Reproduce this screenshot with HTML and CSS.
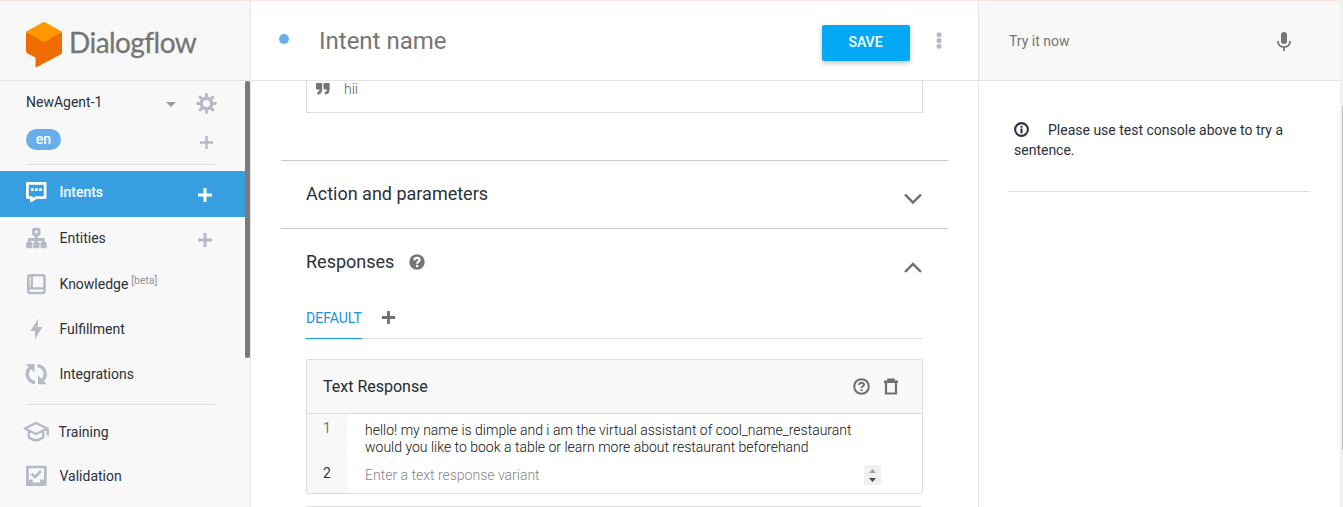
FILE: index.html
```html
<!DOCTYPE html>
<html lang="en">
<head>
<meta charset="utf-8">
<title>Dialogflow</title>
<link rel="stylesheet" href="styles.css">
</head>
<body>
<div class="app">
  <aside class="sidebar">
    <header class="brand">
      <svg class="brand-mark" viewBox="0 0 36 46" width="36" height="46">
        <path fill="#ef6c00" d="M0 10 18 18 36 10V30Q36 31.500 34.500 32.500L11 45Q9.500 45.500 9.500 44V35.500L1.500 31.500Q0 30.500 0 29Z"/>
        <path fill="#ff9800" d="M16.500.5Q18-.3 19.500.5L36 9.800 19.500 19.400Q18 20.200 16.500 19.400L0 9.800Z"/>
      </svg>
      <span class="brand-name">Dialogflow</span>
    </header>
    <div class="side-body">
      <div class="agent">
        <span class="agent-name">NewAgent-1</span>
        <svg class="caret" viewBox="0 0 10 5" width="10" height="5"><path d="M0 0H10L5 5Z"/></svg>
        <svg class="gear" viewBox="0 0 20 20" width="21" height="21">
          <g stroke="currentColor" stroke-width="2.800" stroke-linecap="round">
            <path d="M10 1.500V4.500M10 15.500V18.500M1.500 10H4.500M15.500 10H18.500M3.850 3.850 6 6M14 14 16.150 16.150M16.150 3.850 14 6M6 14 3.850 16.150"/>
          </g>
          <circle cx="10" cy="10" r="5" fill="none" stroke="currentColor" stroke-width="3.200"/>
        </svg>
      </div>
      <div class="lang">
        <span class="pill">en</span>
        <svg class="plus small" viewBox="0 0 16 16" width="15" height="15"><path d="M8 1V15M1 8H15"/></svg>
      </div>
      <hr class="rule">
      <nav class="nav">
        <a class="item active">
          <svg class="icon" viewBox="0 0 22 22" width="22" height="22"><path fill="none" stroke="currentColor" stroke-width="2.800" stroke-linejoin="round" d="M2.400 2.400H20.100V16.600H11L6.500 19.700V16.600H2.400Z"/><path fill="currentColor" d="M5.800 7.300H8.600V10H5.800ZM9.900 7.300H12.700V10H9.900ZM14 7.300H16.800V10H14Z"/></svg>
          <span class="label">Intents</span>
          <svg class="plus" viewBox="0 0 16 16" width="16" height="16"><path d="M8 1V15M1 8H15"/></svg>
        </a>
        <a class="item">
          <svg class="icon" viewBox="0 0 22 22" width="22" height="22"><g fill="none" stroke="currentColor" stroke-width="2.900"><rect x="8.500" y="2.200" width="5.600" height="5.600" rx="1.200"/><path d="M11.300 8V16M4.300 16V12.500H18.300V16"/></g><g fill="currentColor"><rect x="1" y="15" width="6.300" height="6.300" rx="1.200"/><rect x="8.200" y="15" width="6.300" height="6.300" rx="1.200"/><rect x="15.500" y="15" width="6.300" height="6.300" rx="1.200"/></g></svg>
          <span class="label">Entities</span>
          <svg class="plus" viewBox="0 0 16 16" width="16" height="16"><path d="M8 1V15M1 8H15"/></svg>
        </a>
        <a class="item">
          <svg class="icon" viewBox="0 0 22 22" width="22" height="22"><rect x="3.300" y="2.200" width="16.200" height="17.800" rx="1.700" fill="none" stroke="currentColor" stroke-width="2.600"/><path d="M6.800 2V15.300M3 15.300H19" fill="none" stroke="currentColor" stroke-width="2.300"/></svg>
          <span class="label">Knowledge <span class="beta">[beta]</span></span>
        </a>
        <a class="item row-short">
          <svg class="icon" viewBox="0 0 22 22" width="22" height="22"><path fill="currentColor" d="M13.300.5 5.500 13H10L10 21.500 17.300 9H12.700Z"/></svg>
          <span class="label">Fulfillment</span>
        </a>
        <a class="item row-short">
          <svg class="icon" viewBox="0 0 22 22" width="22" height="22"><g fill="none" stroke="currentColor" stroke-width="3.300"><path d="M10 19.500A8.600 8.600 0 0 1 5 4.700"/><path d="M12.300 2.700A8.600 8.600 0 0 1 17.500 17.500"/></g><path fill="currentColor" d="M1 1H9.500V9.500ZM21.700 21.200H13V12.500Z"/></svg>
          <span class="label">Integrations</span>
        </a>
      </nav>
      <hr class="rule">
      <nav class="nav lower">
        <a class="item train">
          <svg class="icon wide" viewBox="0 0 26 22" width="26" height="22"><path fill="none" stroke="currentColor" stroke-width="2.300" stroke-linejoin="round" d="M1.800 7.500 13 2 24.200 7.500 13 13ZM5.800 10V16.500Q13 22 20.200 16.500V10M24.800 8V14.500"/></svg>
          <span class="label">Training</span>
        </a>
        <a class="item">
          <svg class="icon" viewBox="0 0 22 22" width="22" height="22"><path fill="currentColor" fill-rule="evenodd" d="M2 .7H20.700Q21.700.7 21.700 1.700V19.900Q21.700 20.900 20.700 20.900H2Q1 20.900 1 19.900V1.700Q1 .7 2 .7ZM3.700 3.300V14.500H7.700V17.500H15V14.500H19V3.300Z"/><path fill="none" stroke="currentColor" stroke-width="2.700" d="M6.500 8.800 10 12.100 16 6"/></svg>
          <span class="label">Validation</span>
        </a>
      </nav>
      <div class="side-thumb"></div>
    </div>
  </aside>

  <main class="main">
    <header class="topbar">
      <span class="dot"></span>
      <span class="title">Intent name</span>
      <button class="save">SAVE</button>
      <svg class="more" viewBox="0 0 6 17" width="6" height="17"><circle cx="3" cy="2.800" r="2.500"/><circle cx="3" cy="8.500" r="2.500"/><circle cx="3" cy="14.200" r="2.500"/></svg>
    </header>
    <div class="content">
      <div class="phrase">
        <svg viewBox="0 0 14 12" width="14" height="12"><path fill="currentColor" d="M1 0H5Q6.200 0 6.200 1.200V6Q6.200 11.500 1.300 11.500V9Q3.500 9 3.500 6.500H1Q0 6.500 0 5.500V1Q0 0 1 0ZM8.500 0H12.500Q13.700 0 13.700 1.200V6Q13.700 11.500 8.800 11.500V9Q11 9 11 6.500H8.500Q7.500 6.500 7.500 5.500V1Q7.500 0 8.500 0Z"/></svg>
        <span>hii</span>
      </div>
      <section class="section action">
        <h2>Action and parameters</h2>
        <svg class="chev" viewBox="0 0 18 12" width="18" height="12"><path d="M1 1.500 9 9.500 17 1.500"/></svg>
      </section>
      <section class="section responses">
        <h2>Responses</h2>
        <svg class="help" viewBox="0 0 16 16" width="16" height="16"><circle cx="8" cy="8" r="7.700" fill="currentColor"/><path fill="none" stroke="#fff" stroke-width="2.100" d="M5.300 6.300Q5.500 3.900 8 3.900T10.600 6C10.600 7.700 8.100 7.600 8.100 9.700"/><circle cx="8.100" cy="12" r="1.300" fill="#fff"/></svg>
        <svg class="chev up" viewBox="0 0 18 12" width="18" height="12"><path d="M1 10 9 2 17 10"/></svg>
      </section>
      <div class="tabs">
        <span class="tab">DEFAULT</span>
        <svg class="plus tab-plus" viewBox="0 0 16 16" width="15" height="15"><path d="M8 1V15M1 8H15"/></svg>
      </div>
      <div class="card">
        <div class="card-head">
          <span class="card-title">Text Response</span>
          <svg viewBox="0 0 17 17" width="17" height="17"><circle cx="8.500" cy="8.500" r="7.300" fill="none" stroke="currentColor" stroke-width="2.100"/><path fill="none" stroke="currentColor" stroke-width="1.900" d="M6 6.800Q6.200 4.700 8.500 4.700T11 6.700C11 8.200 8.500 8.200 8.500 10"/><path fill="currentColor" d="M7.500 11.200H9.500V13H7.500Z"/></svg>
          <svg class="trash" viewBox="0 0 14 17" width="14" height="17"><path fill="none" stroke="currentColor" stroke-width="2.200" d="M2 4V15.500H12V4"/><path fill="currentColor" d="M0 2.500H3.200V.5H10.800V2.500H14V5H0Z"/></svg>
        </div>
        <div class="variant first">
          <span class="num">1</span>
          <p>hello! my name is dimple and i am the virtual assistant of cool_name_restaurant<br>would you like to book a table or learn more about restaurant beforehand</p>
        </div>
        <div class="variant second">
          <span class="num">2</span>
          <p class="placeholder">Enter a text response variant</p>
          <span class="spin"><svg viewBox="0 0 17 20" width="17" height="20"><path fill="#a3a3a3" d="M5 8 8.500 4 12 8Z"/><path fill="#504545" d="M5 13H12L8.500 17Z"/></svg></span>
        </div>
      </div>
      <div class="next-card"></div>
    </div>
  </main>

  <aside class="console">
    <header class="try">
      <span class="try-text">Try it now</span>
      <svg viewBox="0 0 14 19" width="14" height="19"><rect x="4" y="0" width="6" height="12" rx="3" fill="currentColor"/><path fill="none" stroke="currentColor" stroke-width="1.700" d="M.9 9Q1.200 15 7 15T13.100 9M7 15V19"/></svg>
    </header>
    <div class="notice">
      <svg viewBox="0 0 16 16" width="15" height="15"><circle cx="8" cy="8" r="6.800" fill="none" stroke="currentColor" stroke-width="2.200"/><path stroke="currentColor" stroke-width="2.200" d="M8 7V12M8 4V6"/></svg><span class="notice-text">Please use test console above to try a sentence.</span>
    </div>
  </aside>
  <div class="page-scroll"><div class="page-thumb"></div></div>
</div>
</body>
</html>
```
FILE: styles.css
```css
* { box-sizing: border-box; }
body {
  margin: 0;
  overflow: hidden;
  background: #fff;
  color: #2b303b;
  font: 14px/20px Roboto, "Liberation Sans", sans-serif;
}
svg { display: block; flex: none; }
.app {
  display: grid;
  grid-template-columns: 251px 727px 362px 3px;
  height: 507px;
}
.sidebar, .main, .console { min-width: 0; overflow: hidden; }
.brand, .topbar, .try {
  display: flex;
  height: 81px;
  border-top: 1px solid #fde3e1;
  border-bottom: 1px solid #e4e4e4;
}

/* Sidebar */
.sidebar { background: #f8f8f8; border-right: 1px solid #e4e4e4; }
.brand { padding: 21px 0 0 26px; }
.brand-name {
  margin: 0 0 0 7px;
  color: #757575;
  font: 28px/40px Lato, sans-serif;
  letter-spacing: -0.550px;
  -webkit-text-stroke: 0.3px #757575;
}
.side-body { position: relative; height: 426px; }
.side-thumb {
  position: absolute;
  top: 0;
  right: 0;
  width: 5px;
  height: 277px;
  border-radius: 2px;
  background: #7b7b7b;
}
.agent { display: flex; padding: 11px 33px 0 26px; height: 48px; color: #2b303b; }
.agent-name { flex: 1; }
.caret { margin: 10px 20px 0 0; fill: #9499a8; }
.gear { margin-top: 1px; color: #b5bac6; }
.lang { display: flex; justify-content: space-between; height: 35px; padding: 0 36px 0 26px; }
.pill {
  width: 35px;
  height: 21px;
  border-radius: 11px;
  background: #67aeea;
  color: #fff;
  font-weight: 500;
  line-height: 20px;
  text-align: center;
}
.plus { color: #b5bac6; fill: none; stroke: currentColor; stroke-width: 3; }
.plus.small { margin-top: 6px; stroke-width: 2.600; }
.rule { height: 1px; margin: 0 35px 0 26px; border: 0; background: #e0e0e0; }
.nav { padding-top: 6px; margin-bottom: 5px; }
.item { display: flex; height: 46px; margin-right: 5px; padding: 10px 32px 0 25px; }
.item.row-short { height: 45px; padding-top: 9px; }
.icon { color: #b5bac6; }
.label { flex: 1; margin-left: 12.500px; padding-top: 1px; white-space: nowrap; }
.item .plus { margin-top: 5px; }
.active .plus { margin-top: 6px; }
.active { background: #379fe0; color: #fff; font-weight: 500; }
.active .icon, .active .plus { color: #fff; }
.beta { margin-left: -0.5px; color: #8c919d; font-size: 10.400px; line-height: 1; vertical-align: 5px; }
.lower { padding-top: 6px; }
.item.train { height: 44px; padding-left: 23px; }
.train .label { margin-left: 9.500px; }

/* Intent editor */
.main { background: #fff; }
.dot { width: 10px; height: 10px; margin: 33px 0 0 28px; border-radius: 50%; background: #67aeea; }
.title { flex: 1; margin: 25px 0 0 30px; color: #757575; font-size: 24px; line-height: 30px; }
.save {
  width: 88px;
  height: 36px;
  margin-top: 24px;
  padding: 0 1px 1px 0;
  border: 0;
  border-radius: 2px;
  background: #03a9f4;
  box-shadow: 0 2px 5px rgba(0, 0, 0, .26);
  color: #fff;
  font: 500 14px/35px Roboto, sans-serif;
}
.more { margin: 31px 36px 0 26px; fill: #b5b9c5; }
.content { padding: 0 30px; }
.phrase {
  display: flex;
  gap: 14px;
  height: 32px;
  margin: 0 25px;
  padding: 2px 0 0 9px;
  border: 1px solid #dcdcdc;
  border-top: 0;
  color: #757575;
  font-weight: 300;
  line-height: 13px;
}
.phrase span { color: #555; }
.section { display: flex; padding: 0 25px; border-top: 1px solid #ccc5c5; }
.action { height: 68px; margin-top: 47px; padding-top: 21px; }
.responses { height: 79px; padding-top: 21px; }
h2 { margin: 0; font-size: 18px; line-height: 24px; font-weight: 400; }
.chev { margin: 11px 1px 0 auto; fill: none; stroke: #6c6c6c; stroke-width: 2.400; }
.chev.up { margin-top: 12px; }
.help { margin: 4px 0 0 15px; color: #757575; }
.tabs { display: flex; height: 32px; margin: 0 25px; border-bottom: 1px solid #dcdcdc; }
.tab { width: 56px; height: 32px; border-bottom: 1px solid #0b98e6; color: #1794dc; line-height: 23px; }
.tab-plus { margin: 3px 0 0 19px; color: #707070; }
.card { height: 135px; margin: 20px 25px 0; border: 1px solid #dcdcdc; border-radius: 2px; }
.card-head { display: flex; height: 54px; padding: 18px 24px 0 16px; border-bottom: 1px solid #dcdcdc; background: #f8f8f8; color: #707070; }
.card-title { flex: 1; color: #262a33; font-size: 16px; line-height: 18px; }
.trash { margin-left: 14px; }
.variant { display: flex; }
.variant p { margin: 0; padding: 8px 0 0 18px; color: #111; font-weight: 300; line-height: 17px; white-space: nowrap; }
.num { width: 40px; padding: 5px 0 0 16px; background: #f8f8f8; color: #777; line-height: 18px; }
.first { height: 46px; }
.second { height: 33px; }
.second .num { padding-top: 4px; color: #333; }
.variant .placeholder { flex: 1; padding-top: 7px; color: #858585; }
.spin { width: 17px; height: 20px; margin: 5px 41px 0 0; background: #f0f0f0; }
.next-card { height: 10px; margin: 12px 25px 0; border: 1px solid #dcdcdc; border-radius: 2px; }

/* Test console */
.console { border-left: 1px solid #e4e4e4; }
.try { padding: 30px 49px 0 30px; background: #f8f8f8; color: #757575; }
.try-text { flex: 1; }
.try svg { margin-top: 1px; }
.notice { height: 111px; margin: 0 30px; padding: 39px 0 0 5px; border-bottom: 1px solid #dedede; }
.notice svg { display: inline-block; vertical-align: -2px; }
.notice-text { margin-left: 19px; }
.page-scroll { padding: 106px 0 0 2px; background: #f1f1f1; }
.page-thumb { height: 344px; background: #bdbdbd; }
```
